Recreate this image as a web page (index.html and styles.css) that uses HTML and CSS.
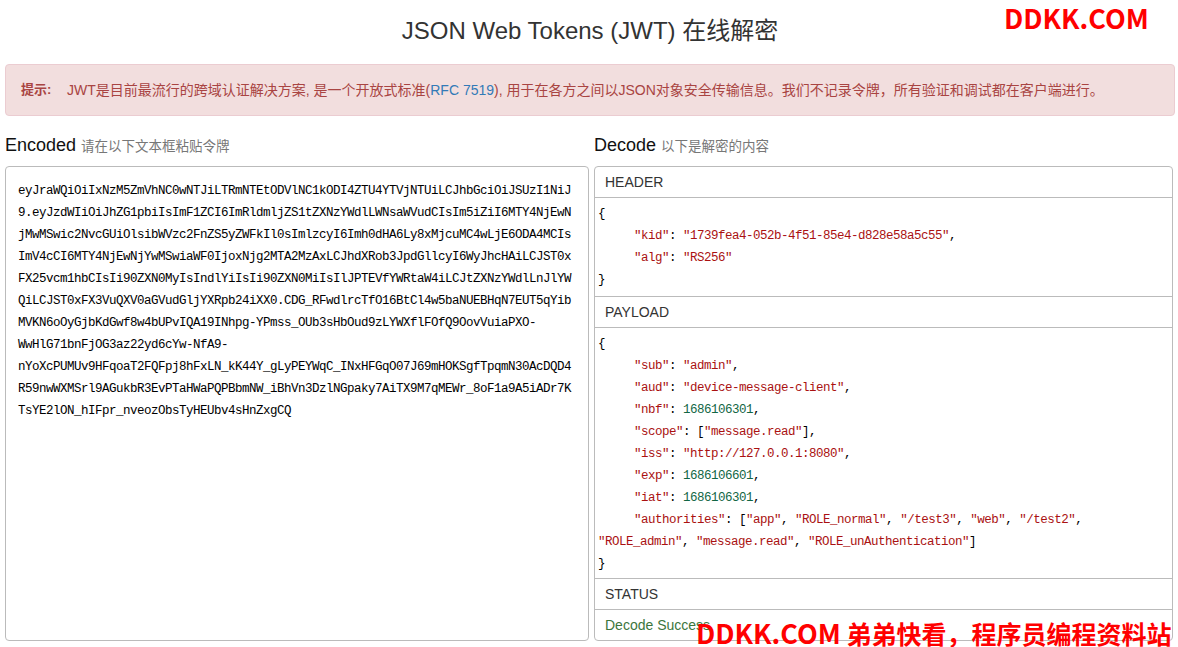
FILE: index.html
```html
<!DOCTYPE html>
<html lang="zh-CN">
<head>
<meta charset="utf-8">
<title>JSON Web Tokens (JWT) 在线解密</title>
<link rel="stylesheet" href="styles.css">
</head>
<body>
<div class="page">
  <h1 class="title">JSON Web Tokens (JWT) 在线解密</h1>
  <div class="alert"><strong class="alert-label">提示:</strong><span>JWT是目前最流行的跨域认证解决方案, 是一个开放式标准(<a class="alert-link" href="#">RFC 7519</a>), 用于在各方之间以JSON对象安全传输信息。我们不记录令牌，所有验证和调试都在客户端进行。</span></div>
  <div class="columns">
    <section class="column">
      <h2 class="heading">Encoded <small class="hint">请在以下文本框粘贴令牌</small></h2>
      <div class="box token">eyJraWQiOiIxNzM5ZmVhNC0wNTJiLTRmNTEtODVlNC1kODI4ZTU4YTVjNTUiLCJhbGciOiJSUzI1NiJ9.eyJzdWIiOiJhZG1pbiIsImF1ZCI6ImRldmljZS1tZXNzYWdlLWNsaWVudCIsIm5iZiI6MTY4NjEwNjMwMSwic2NvcGUiOlsibWVzc2FnZS5yZWFkIl0sImlzcyI6Imh0dHA6Ly8xMjcuMC4wLjE6ODA4MCIsImV4cCI6MTY4NjEwNjYwMSwiaWF0IjoxNjg2MTA2MzAxLCJhdXRob3JpdGllcyI6WyJhcHAiLCJST0xFX25vcm1hbCIsIi90ZXN0MyIsIndlYiIsIi90ZXN0MiIsIlJPTEVfYWRtaW4iLCJtZXNzYWdlLnJlYWQiLCJST0xFX3VuQXV0aGVudGljYXRpb24iXX0.CDG_RFwdlrcTfO16BtCl4w5baNUEBHqN7EUT5qYibMVKN6oOyGjbKdGwf8w4bUPvIQA19INhpg-YPmss_OUb3sHbOud9zLYWXflFOfQ9OovVuiaPXO-WwHlG71bnFjOG3az22yd6cYw-NfA9-nYoXcPUMUv9HFqoaT2FQFpj8hFxLN_kK44Y_gLyPEYWqC_INxHFGqO07J69mHOKSgfTpqmN30AcDQD4R59nwWXMSrl9AGukbR3EvPTaHWaPQPBbmNW_iBhVn3DzlNGpaky7AiTX9M7qMEWr_8oF1a9A5iADr7KTsYE2lON_hIFpr_nveozObsTyHEUbv4sHnZxgCQ</div>
    </section>
    <section class="column">
      <h2 class="heading">Decode <small class="hint">以下是解密的内容</small></h2>
      <div class="box decoded">
        <div class="section-title">HEADER</div>
        <div class="code code-header">
          <div>{</div>
          <div class="prop"><span class="str">"kid"</span>: <span class="str">"1739fea4-052b-4f51-85e4-d828e58a5c55"</span>,</div>
          <div class="prop"><span class="str">"alg"</span>: <span class="str">"RS256"</span></div>
          <div>}</div>
        </div>
        <div class="section-title">PAYLOAD</div>
        <div class="code">
          <div>{</div>
          <div class="prop"><span class="str">"sub"</span>: <span class="str">"admin"</span>,</div>
          <div class="prop"><span class="str">"aud"</span>: <span class="str">"device-message-client"</span>,</div>
          <div class="prop"><span class="str">"nbf"</span>: <span class="num">1686106301</span>,</div>
          <div class="prop"><span class="str">"scope"</span>: [<span class="str">"message.read"</span>],</div>
          <div class="prop"><span class="str">"iss"</span>: <span class="str">"http://127.0.0.1:8080"</span>,</div>
          <div class="prop"><span class="str">"exp"</span>: <span class="num">1686106601</span>,</div>
          <div class="prop"><span class="str">"iat"</span>: <span class="num">1686106301</span>,</div>
          <div class="prop"><span class="str">"authorities"</span>: [<span class="str">"app"</span>, <span class="str">"ROLE_normal"</span>, <span class="str">"/test3"</span>, <span class="str">"web"</span>, <span class="str">"/test2"</span>, <span class="str">"ROLE_admin"</span>, <span class="str">"message.read"</span>, <span class="str">"ROLE_unAuthentication"</span>]</div>
          <div>}</div>
        </div>
        <div class="section-title">STATUS</div>
        <div class="status">Decode Success</div>
      </div>
    </section>
  </div>
</div>
<div class="mark mark-top"><span class="mark-latin">DDKK.COM</span></div>
<div class="mark mark-bottom"><span class="mark-latin">DDKK.COM</span> 弟弟快看，程序员编程资料站</div>
</body>
</html>
```
FILE: styles.css
```css
* { box-sizing: border-box; }
html, body { margin: 0; height: 100%; overflow: hidden; background: #fff; }
body {
  font-family: "Liberation Sans", "Noto Sans CJK SC", sans-serif;
  font-size: 14px;
  color: #333;
}
.page { padding: 0 5px; }
.title {
  margin: 0;
  height: 64px;
  padding: 15px 0 0 2px;
  font-size: 24px;
  line-height: 32px;
  font-weight: 400;
  text-align: center;
}
.alert {
  height: 52px;
  margin-right: -2px;
  padding: 0 15px 3px;
  display: flex;
  align-items: center;
  background: #f2dede;
  border: 1px solid #ebccd1;
  border-radius: 4px;
  color: #a94442;
  font-size: 14px;
}
.alert-label { width: 46px; flex: none; font-size: 13px; }
.alert-link { color: #337ab7; text-decoration: none; }
.columns {
  display: grid;
  grid-template-columns: 584px 1fr;
  column-gap: 5px;
  margin-top: 16px;
}
.heading {
  margin: 0 0 8px;
  height: 26px;
  font-size: 18px;
  line-height: 26px;
  font-weight: 400;
  color: #111;
}
.hint { font-size: 13.5px; color: #777; }
.box {
  height: 475px;
  border: 1px solid #bbb;
  border-radius: 4px;
  overflow: hidden;
}
.token, .code {
  font-family: "Liberation Mono", monospace;
  font-size: 12.5px;
  letter-spacing: -0.5px;
  line-height: 22px;
  color: #000;
}
.token {
  padding: 13px 12px 12px;
  overflow-wrap: anywhere;
}
.section-title {
  height: 31px;
  padding: 0 10px;
  line-height: 30px;
  border-bottom: 1px solid #bbb;
}
.code {
  padding: 5px 3px 3px;
  border-bottom: 1px solid #bbb;
}
.code-header { padding-bottom: 5px; }
.prop { text-indent: 36px; }
.str { color: #a11; }
.num { color: #164; }
.status {
  padding: 0 10px;
  line-height: 30px;
  color: #3c763d;
}
.mark {
  position: absolute;
  color: #f00;
  font-family: "Noto Sans CJK SC", "Open Sans", sans-serif;
  font-weight: 700;
  font-size: 25px;
  line-height: 26px;
  white-space: nowrap;
}
.mark-latin { font-size: 27px; }
.mark-top { top: 5px; left: 1004px; }
.mark-bottom { top: 620px; left: 696px; }
```
